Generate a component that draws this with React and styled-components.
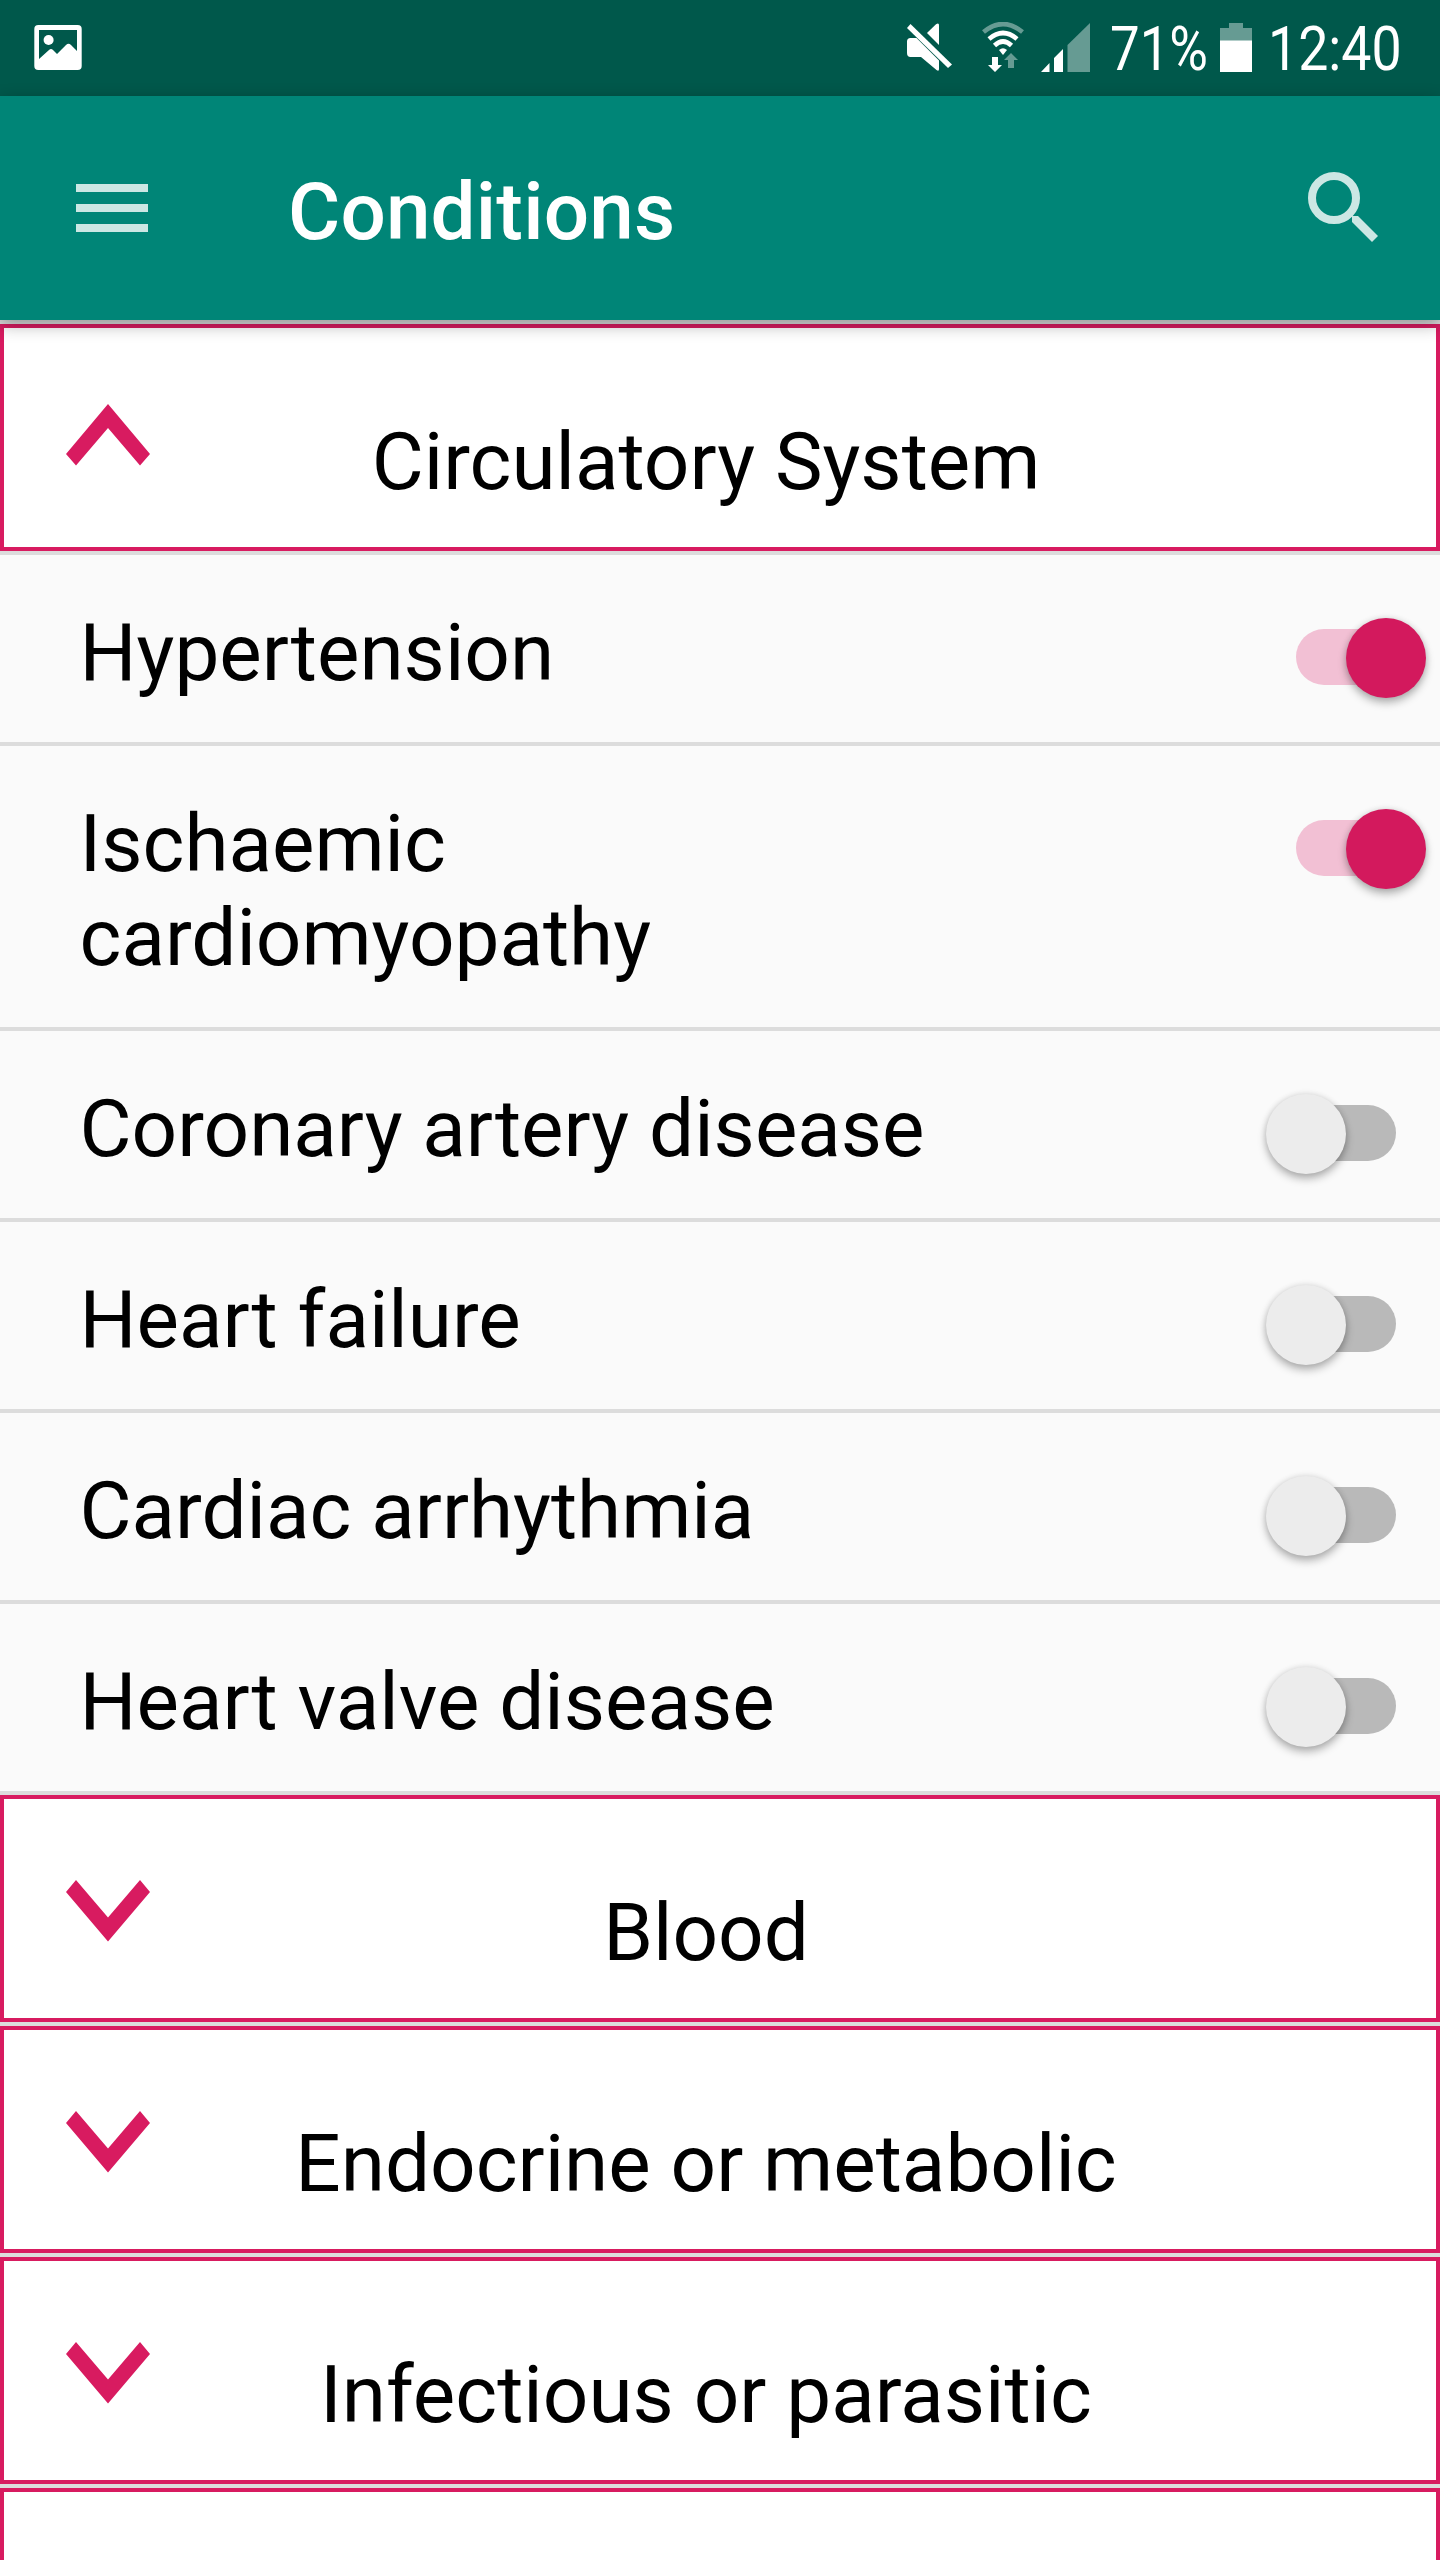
import React, { useState } from 'react';
import styled, { createGlobalStyle } from 'styled-components';

const GlobalStyle = createGlobalStyle`
  *, *::before, *::after { box-sizing: border-box; }
  html, body { margin: 0; padding: 0; background: #fafafa; }
  body { overflow: hidden; }
`;

const Screen = styled.div`
  display: flex;
  flex-direction: column;
  width: 1440px;
  height: 2560px;
  overflow: hidden;
  background: #fafafa;
  font-family: Roboto, "Liberation Sans", sans-serif;
  color: #000;
`;

const StatusBar = styled.div`
  display: flex;
  flex: none;
  align-items: center;
  justify-content: space-between;
  height: 96px;
  padding: 0 38px 2px 34px;
  background: #00584b;
  color: #fff;
`;

const StatusIcons = styled.div`
  display: flex;
  align-items: center;
`;

const StatusText = styled.div`
  width: ${(p) => p.$width}px;
  padding-top: 4px;
  margin-left: ${(p) => p.$gap}px;
  font-size: 61px;
  line-height: 88px;
  white-space: nowrap;

  span {
    display: inline-block;
    transform: scaleX(${(p) => p.$squeeze});
    transform-origin: left center;
  }
`;

const Icon = styled.svg`
  display: block;
  flex: none;
  margin-left: ${(p) => p.$gap || 0}px;
`;

const AppBar = styled.header`
  display: flex;
  flex: none;
  align-items: center;
  position: relative;
  z-index: 1;
  height: 224px;
  padding: 0 60px 0 76px;
  background: #008577;
  box-shadow: 0 5px 16px rgba(0, 0, 0, 0.32);
`;

const Title = styled.h1`
  flex: 1;
  margin: 0 0 0 140px;
  padding-top: 8px;
  font-size: 80px;
  line-height: 94px;
  font-weight: 500;
  letter-spacing: 0.15px;
  color: #fff;
`;

const IconButton = styled.button`
  display: flex;
  padding: 0;
  border: 0;
  background: none;
  color: #cce7e4;
`;

const List = styled.main`
  display: flex;
  flex-direction: column;
  gap: 4px;
  padding-top: 4px;
  background: #dcdcdc;
`;

const GroupHeader = styled.button`
  display: flex;
  flex: none;
  align-items: flex-start;
  height: 227px;
  padding: 0 0 0 62px;
  border: 4px solid #d81b60;
  background: #fff;
  color: #000;
  font-family: inherit;
`;

const Chevron = styled.svg`
  display: block;
  flex: none;
  margin-top: ${(p) => (p.$open ? 76 : 81)}px;
`;

const GroupTitle = styled.span`
  flex: 1;
  padding: 87px 174px 0 0;
  font-size: 80px;
  line-height: 94px;
  text-align: center;
`;

const Row = styled.div`
  display: flex;
  flex: none;
  align-items: flex-start;
  justify-content: space-between;
  min-height: 187px;
  padding: 51px 44px 42px 79.5px;
  background: #fafafa;
`;

const RowLabel = styled.span`
  max-width: 900px;
  font-size: 80px;
  line-height: 94px;
`;

const Track = styled.button`
  position: relative;
  width: 100px;
  height: 56px;
  margin-top: 23px;
  padding: 0;
  border: 0;
  border-radius: 28px;
  background: ${(p) => (p.$on ? '#f2c0d4' : '#b9b9b9')};
`;

const Thumb = styled.span`
  position: absolute;
  top: -11px;
  left: ${(p) => (p.$on ? 50 : -30)}px;
  width: 80px;
  height: 80px;
  border-radius: 50%;
  background: ${(p) => (p.$on ? '#d3195d' : '#ececec')};
  box-shadow: 0 5px 8px rgba(0, 0, 0, 0.28), 0 0 6px rgba(0, 0, 0, 0.12);
`;

function PictureIcon() {
  return (
    <Icon width="48" height="45" viewBox="0 0 48 45">
      <rect x="0.3" width="47.4" height="45" rx="4" fill="#fff" />
      <path d="M5 5h38v21l-6-6q-2.500-2.500-5 0l-9 9-4-4q-2-1.800-4 0L5 34Z" fill="#00584b" />
      <circle cx="14.600" cy="15" r="5" fill="#fff" />
    </Icon>
  );
}

function MuteIcon() {
  return (
    <Icon width="45" height="48" viewBox="0 0 45 48" fill="#fff">
      <path d="M3.500 15h6L32 37.500V46q0 3-2.500 1L14 34H3.500Q0 34 0 30V18.500Q0 15 3.500 15Z" />
      <path d="M20 10 29 1.200q3-2 3 1V22Z" />
      <path d="M3.500 1 45 41.500 41 45 0 5Z" />
    </Icon>
  );
}

function WifiIcon() {
  return (
    <Icon $gap={30} width="42" height="50" viewBox="0 0 42 50">
      <g fill="none" strokeWidth="4.600">
        <path d="M1.500 10Q21-6 40.500 10" stroke="#669b93" />
        <path d="M7 17Q21 5 35 17" stroke="#fff" />
        <path d="M12.500 23.500Q21 15.500 29.500 23.500" stroke="#fff" />
      </g>
      <path d="M17 28q4-3.500 8 0l-4 5Z" fill="#fff" />
      <path d="M10 35h6v8h4l-7 7-7-7h4Z" fill="#fff" />
      <path d="M26 46v-8h-4l7-7 7 7h-4v8Z" fill="#669b93" />
    </Icon>
  );
}

function SignalIcon() {
  return (
    <Icon $gap={17} width="49" height="49" viewBox="0 0 49 49">
      <path d="M0 49 8.500 40v9ZM13 35l9-9v23h-9Z" fill="#fff" />
      <path d="M26.500 22 49 0v49H26.500Z" fill="#669b93" />
    </Icon>
  );
}

function BatteryIcon() {
  return (
    <Icon width="32" height="49" viewBox="0 0 32 49">
      <path d="M9 0h14v5h9v13H0V5h9Z" fill="#669b93" />
      <path d="M0 17.500h32V49H0Z" fill="#fff" />
    </Icon>
  );
}

function Arrow({ open }) {
  return (
    <Chevron $open={open} width="84" height="62" viewBox="0 0 84 62">
      <path
        d={open ? 'M42 0 84 50 74 61.500 42 24 10 61.500 0 50Z' : 'M42 61.500 84 12 74 0 42 37.500 10 0 0 12Z'}
        fill="#d81b60"
      />
    </Chevron>
  );
}

const groups = [
  {
    name: 'Circulatory System',
    open: true,
    items: [
      'Hypertension',
      'Ischaemic cardiomyopathy',
      'Coronary artery disease',
      'Heart failure',
      'Cardiac arrhythmia',
      'Heart valve disease',
    ],
  },
  { name: 'Blood' },
  { name: 'Endocrine or metabolic' },
  { name: 'Infectious or parasitic' },
  { name: '' },
];

export default function App() {
  const [selected, setSelected] = useState(['Hypertension', 'Ischaemic cardiomyopathy']);
  const toggle = (item) =>
    setSelected((s) => (s.includes(item) ? s.filter((i) => i !== item) : [...s, item]));

  return (
    <>
      <GlobalStyle />
      <Screen>
        <StatusBar>
          <PictureIcon />
          <StatusIcons>
            <MuteIcon />
            <WifiIcon />
            <SignalIcon />
            <StatusText $gap={20} $width={110} $squeeze={0.865}><span>71%</span></StatusText>
            <BatteryIcon />
            <StatusText $gap={16} $width={134} $squeeze={0.88}><span>12:40</span></StatusText>
          </StatusIcons>
        </StatusBar>
        <AppBar>
          <IconButton>
            <svg width="72" height="48" viewBox="0 0 72 48" fill="currentColor">
              <path d="M0 0h72v8H0ZM0 20h72v8H0ZM0 40h72v8H0Z" />
            </svg>
          </IconButton>
          <Title>Conditions</Title>
          <IconButton>
            <svg width="72" height="72" viewBox="0 0 72 72">
              <circle cx="26" cy="26" r="22" fill="none" stroke="currentColor" strokeWidth="8" />
              <path d="M44 44h6L70 64 64 70 44 50Z" fill="currentColor" />
            </svg>
          </IconButton>
        </AppBar>
        <List>
          {groups.map((group) => (
            <React.Fragment key={group.name}>
              <GroupHeader>
                {group.name && <Arrow open={group.open} />}
                <GroupTitle>{group.name}</GroupTitle>
              </GroupHeader>
              {group.items?.map((item) => {
                const on = selected.includes(item);
                return (
                  <Row key={item}>
                    <RowLabel>{item}</RowLabel>
                    <Track $on={on} onClick={() => toggle(item)}>
                      <Thumb $on={on} />
                    </Track>
                  </Row>
                );
              })}
            </React.Fragment>
          ))}
        </List>
      </Screen>
    </>
  );
}
